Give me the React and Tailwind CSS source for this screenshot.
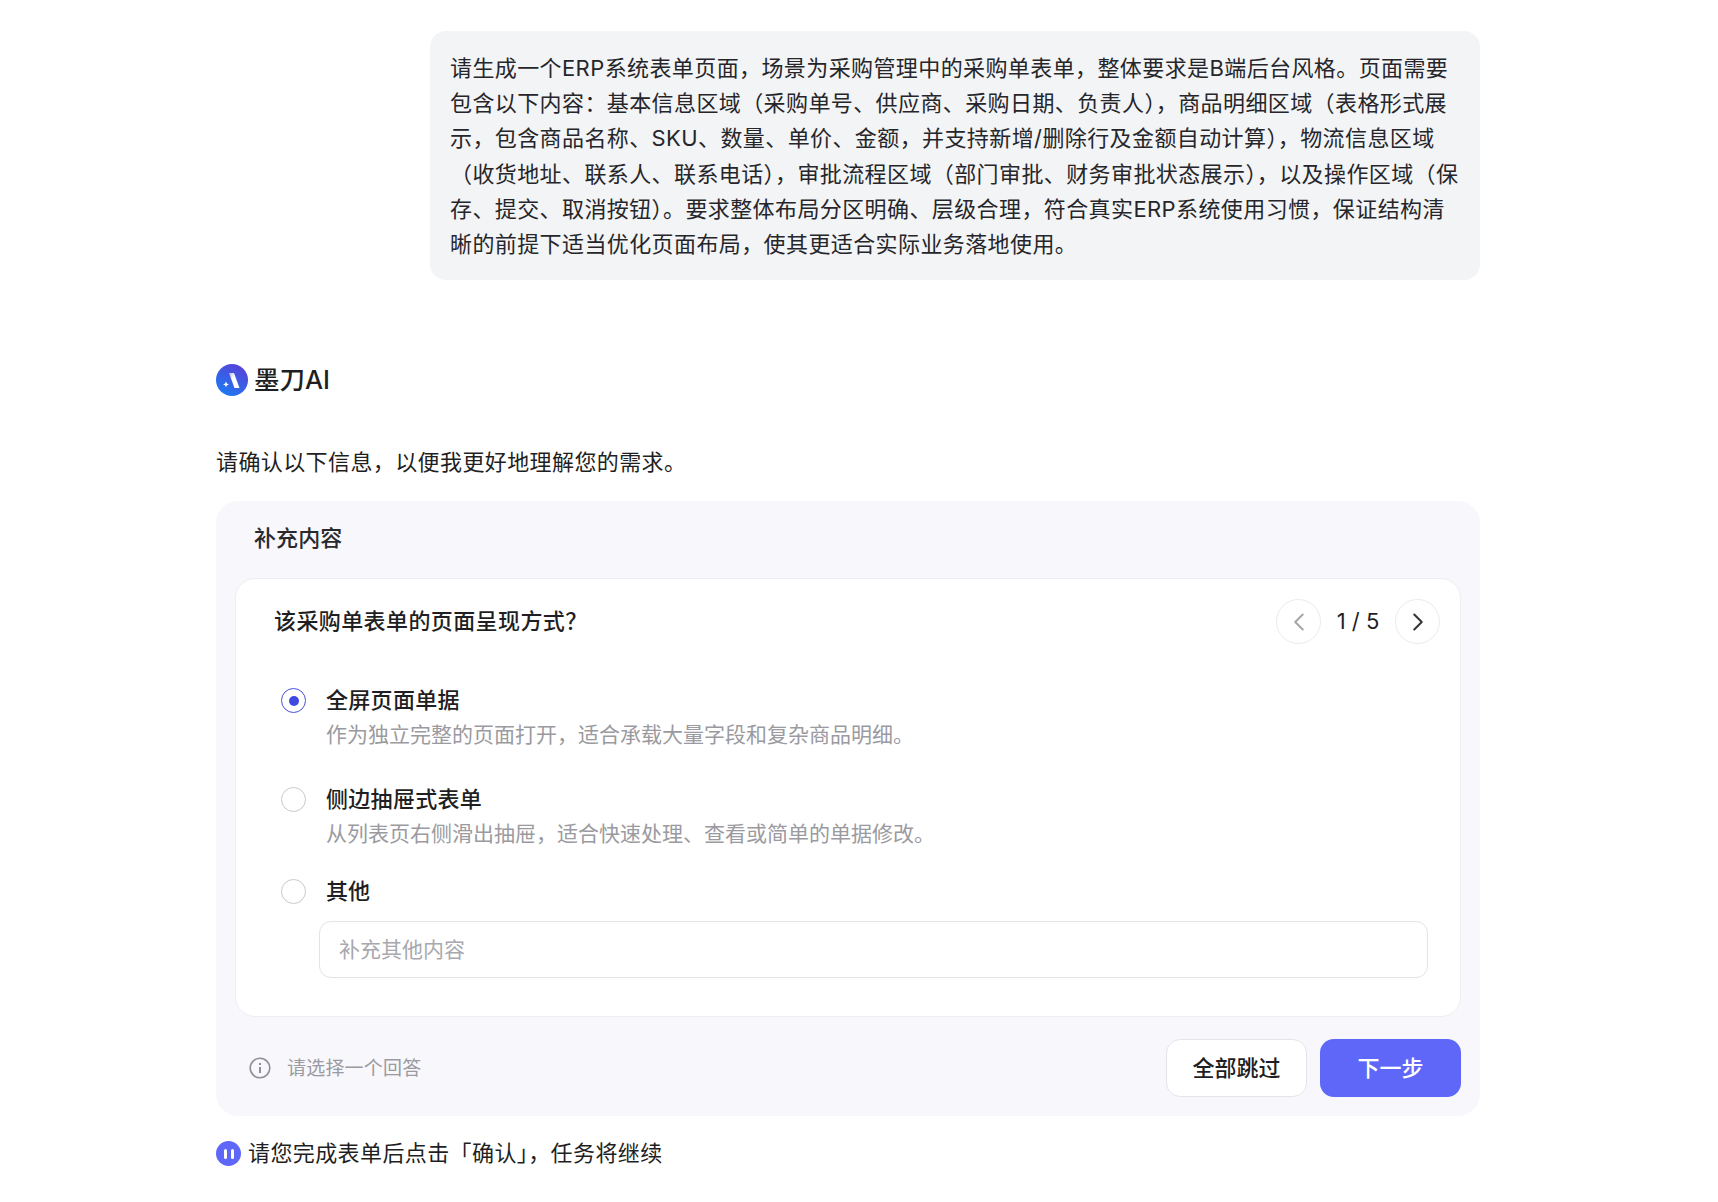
import { ChevronLeft, ChevronRight } from "lucide-react";

const options = [
  { title: "全屏页面单据", desc: "作为独立完整的页面打开，适合承载大量字段和复杂商品明细。", selected: true },
  { title: "侧边抽屉式表单", desc: "从列表页右侧滑出抽屉，适合快速处理、查看或简单的单据修改。" },
];

function Radio({ selected }) {
  return (
    <span
      className={`flex h-[25px] w-[25px] shrink-0 items-center justify-center rounded-full border bg-white ${
        selected ? "border-[#4a50d8]" : "border-[#c9c9cf]"
      }`}
    >
      {selected && <span className="h-[10px] w-[10px] rounded-full bg-[#3f49e0]" />}
    </span>
  );
}

function Logo() {
  return (
    <svg width="32" height="32" viewBox="0 0 32 32" className="shrink-0">
      <defs>
        <linearGradient id="logoBg" x1="0.8" y1="0" x2="0.2" y2="1">
          <stop offset="0" stopColor="#5b3fd6" />
          <stop offset="1" stopColor="#1a7cf5" />
        </linearGradient>
        <linearGradient id="logoBar" x1="0" y1="0" x2="0.6" y2="0.6">
          <stop offset="0" stopColor="#fff" stopOpacity="0.55" />
          <stop offset="0.6" stopColor="#fff" />
        </linearGradient>
      </defs>
      <circle cx="16" cy="16" r="16" fill="url(#logoBg)" />
      <path d="M13 9h5l5.5 15h-5z" fill="url(#logoBar)" />
      <path d="M10 17.5l.9 2 2 .9-2 .9-.9 2-.9-2-2-.9 2-.9z" fill="#fff" />
    </svg>
  );
}

export default function App() {
  return (
    <div className="min-h-[1202px] bg-white font-['Inter','Noto_Sans_CJK_SC',sans-serif] text-[#1f1f23]">
      <div className="ml-[216px] w-[1264px] pt-[31px]">
        {/* user message */}
        <div className="ml-[214px] rounded-[16px] bg-[#f3f4f6] pb-[18px] pl-[20px] pr-[18px] pt-[20px] text-[22px] leading-[35.2px] tracking-[0.4px] text-[#26262a]">
          请生成一个ERP系统表单页面，场景为采购管理中的采购单表单，整体要求是B端后台风格。页面需要包含以下内容：基本信息区域（采购单号、供应商、采购日期、负责人），商品明细区域（表格形式展示，包含商品名称、SKU、数量、单价、金额，并支持新增/删除行及金额自动计算），物流信息区域（收货地址、联系人、联系电话），审批流程区域（部门审批、财务审批状态展示），以及操作区域（保存、提交、取消按钮）。要求整体布局分区明确、层级合理，符合真实ERP系统使用习惯，保证结构清晰的前提下适当优化页面布局，使其更适合实际业务落地使用。
        </div>

        {/* assistant header */}
        <div className="mt-[84px] flex h-[32px] items-center gap-[6px]">
          <Logo />
          <span className="text-[25.5px] font-medium">墨刀AI</span>
        </div>

        <p className="mt-[49px] text-[22px] leading-[35px] tracking-[0.4px]">请确认以下信息，以便我更好地理解您的需求。</p>

        {/* question card */}
        <div className="mt-[21px] rounded-[22px] bg-[#f7f7fc] px-[20px] pb-[19px] pt-[19px]">
          <div className="pl-[18px] text-[22px] font-medium leading-[36px] tracking-[0.1px] text-[#2a2a2e]">补充内容</div>

          <div className="-mx-px mt-[22px] rounded-[20px] border border-[#eeeef2] bg-white pb-[38px] pl-[38px] pr-[20px] pt-[20px]">
            <div className="flex items-center justify-between">
              <span className="text-[22px] font-medium tracking-[0.4px]">该采购单表单的页面呈现方式？</span>
              <div className="flex items-center">
                <button className="flex h-[45px] w-[45px] items-center justify-center rounded-full border border-[#ebebef] text-[#a5a5ab]">
                  <ChevronLeft size={30} strokeWidth={1.6} />
                </button>
                <span className="w-[74px] text-center text-[22px]">1 / 5</span>
                <button className="flex h-[45px] w-[45px] items-center justify-center rounded-full border border-[#ebebef] text-[#333338]">
                  <ChevronRight size={30} strokeWidth={1.6} />
                </button>
              </div>
            </div>

            <div className="mt-[39px] pl-[7px]">
              {options.map((o) => (
                <div key={o.title} className="mb-[30px] flex gap-[20px]">
                  <div className="pt-[5px]">
                    <Radio selected={o.selected} />
                  </div>
                  <div>
                    <div className="text-[22px] font-medium leading-[35px] tracking-[0.3px]">{o.title}</div>
                    <div className="text-[21px] leading-[34px] text-[#9a9aa0]">{o.desc}</div>
                  </div>
                </div>
              ))}
              <div className="-mt-[7px] flex items-center gap-[20px]">
                <Radio />
                <span className="text-[22px] font-medium leading-[35px]">其他</span>
              </div>
            </div>
            <input
              placeholder="补充其他内容"
              className="ml-[45px] mt-[12px] block h-[57px] w-[1109px] rounded-[12px] border border-[#e3e3e8] bg-white px-[19px] text-[21px] outline-none placeholder:text-[#a8a8ae]"
            />
          </div>

          <div className="-mr-px mt-[22px] flex items-center justify-between">
            <div className="flex items-center gap-[16px] pl-[13px] text-[19px] tracking-[0.2px] text-[#9a9aa0]">
              <svg width="22" height="22" viewBox="0 0 22 22" fill="none" stroke="#8f8f95" strokeWidth="1.6">
                <circle cx="11" cy="11" r="9.8" />
                <path d="M11 10v6" strokeWidth="2" />
                <path d="M11 6v2" strokeWidth="2" />
              </svg>
              <span className="translate-y-px">请选择一个回答</span>
            </div>
            <div className="flex gap-[13px]">
              <button className="h-[58px] w-[141px] rounded-[14px] border border-[#e4e4ea] bg-white text-[22px] font-medium">全部跳过</button>
              <button className="h-[58px] w-[141px] rounded-[14px] bg-[#5f67f8] text-[22px] font-medium text-white">下一步</button>
            </div>
          </div>
        </div>

        <div className="mt-[20px] flex items-center gap-[7px] text-[22px] leading-[35px] tracking-[0.4px]">
          <span className="flex h-[25px] w-[25px] items-center justify-center gap-[4px] rounded-full bg-[#5f67f8]">
            <span className="h-[10px] w-[3px] rounded-full bg-white" />
            <span className="h-[10px] w-[3px] rounded-full bg-white" />
          </span>
          请您完成表单后点击「确认」，任务将继续
        </div>
      </div>
    </div>
  );
}
